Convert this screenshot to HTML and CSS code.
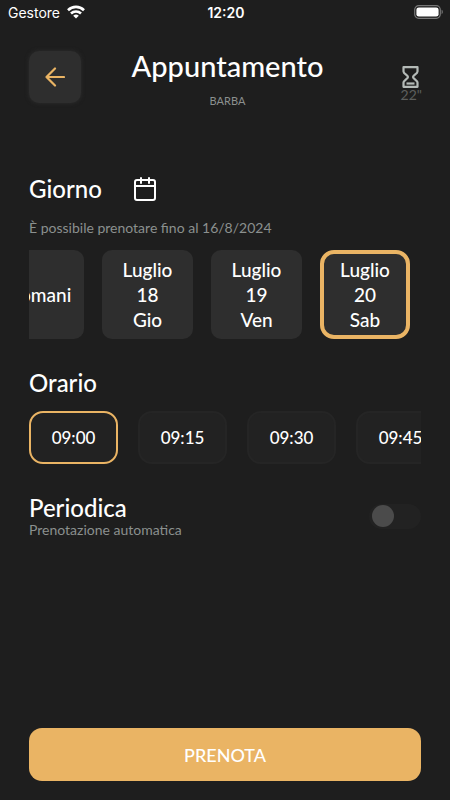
FILE: index.html
```html
<!DOCTYPE html>
<html lang="it">
<head>
<meta charset="utf-8">
<meta name="viewport" content="width=device-width, initial-scale=1">
<title>Appuntamento</title>
<link rel="stylesheet" href="styles.css">
</head>
<body>
<div class="status">
  <div class="status-left">
    <span>Gestore</span>
    <svg width="20" height="14" viewBox="0 0 18 14" fill="none" stroke="#fff" stroke-width="2.6" aria-hidden="true">
      <path d="M1 5.2a11.4 11.4 0 0 1 16 0"/>
      <path d="M4 8.5a7.2 7.2 0 0 1 10 0"/>
      <path d="M9 13.6 6.2 10.8a4 4 0 0 1 5.6 0Z" fill="#fff" stroke="none"/>
    </svg>
  </div>
  <time class="clock">12:20</time>
  <svg class="battery" width="30" height="14" viewBox="0 0 30 14" aria-hidden="true">
    <rect x="0.7" y="0.7" width="25.6" height="12.6" rx="4" fill="none" stroke="#777" stroke-width="1.2"/>
    <rect x="2.4" y="2.4" width="22.2" height="9.2" rx="2.4" fill="#fff"/>
    <path d="M27.6 4.8c1.6.6 1.6 3.8 0 4.4Z" fill="#777"/>
  </svg>
</div>
<header class="header">
  <button class="back" type="button" aria-label="Indietro">
    <svg width="20" height="20" viewBox="0 0 20 20" fill="none" stroke="#eab464" stroke-width="2.2" stroke-linecap="round" stroke-linejoin="round" aria-hidden="true">
      <path d="M19 10H1.500M10 1.500 1.500 10l8.500 8.500"/>
    </svg>
  </button>
  <div class="heading">
    <h1>Appuntamento</h1>
    <p class="service">BARBA</p>
  </div>
  <div class="duration">
    <svg width="18" height="22" viewBox="0 0 18 22" fill="none" stroke="#b4bab7" stroke-width="2.2" stroke-linejoin="round" aria-hidden="true">
      <path d="M1.500 1.200h14v4.200c0 2.300-4.500 4-4.500 5.600s4.500 3.300 4.500 5.600v4.200h-14v-4.200C1.500 14.300 6 12.600 6 11S1.500 7.700 1.500 5.400Z"/>
      <path d="M4.500 17.500h8"/>
    </svg>
    <span>22"</span>
  </div>
</header>
<main class="content">
  <section class="day">
    <div class="title-row">
      <h2>Giorno</h2>
      <button class="calendar" type="button" aria-label="Apri calendario">
        <svg width="22" height="24" viewBox="0 0 22 24" fill="none" stroke="#fff" stroke-width="2" stroke-linecap="round" aria-hidden="true">
          <rect x="1" y="3" width="20" height="20" rx="2"/>
          <path d="M1 9h20M7 1v5M15 1v5"/>
        </svg>
      </button>
    </div>
    <p class="note">È possibile prenotare fino al 16/8/2024</p>
    <div class="days">
      <button class="card" type="button">Domani</button>
      <button class="card" type="button">Luglio<br>18<br>Gio</button>
      <button class="card" type="button">Luglio<br>19<br>Ven</button>
      <button class="card selected" type="button" aria-pressed="true">Luglio<br>20<br>Sab</button>
    </div>
  </section>
  <section class="hours">
    <h2>Orario</h2>
    <div class="times">
      <button class="slot selected" type="button" aria-pressed="true">09:00</button>
      <button class="slot" type="button">09:15</button>
      <button class="slot" type="button">09:30</button>
      <button class="slot" type="button">09:45</button>
    </div>
  </section>
  <section class="periodic">
    <label for="periodic">
      <span class="label-title">Periodica</span>
      <span class="label-note">Prenotazione automatica</span>
    </label>
    <input class="switch" id="periodic" type="checkbox" role="switch">
  </section>
</main>
<footer class="footer">
  <button class="book" type="button">PRENOTA</button>
</footer>
</body>
</html>
```
FILE: styles.css
```css
* {
  box-sizing: border-box;
}

body {
  margin: 0;
  min-height: 100vh;
  display: flex;
  flex-direction: column;
  background: #1e1e1e;
  color: #fff;
  font-family: Lato, "Open Sans", sans-serif;
}

h1, h2, p {
  margin: 0;
  font-weight: 500;
}

button {
  margin: 0;
  padding: 0;
  border: 0;
  background: none;
  color: inherit;
  font: inherit;
  cursor: pointer;
}

svg {
  display: block;
}

.status {
  display: grid;
  grid-template-columns: 1fr auto 1fr;
  align-items: center;
  height: 24px;
  padding: 0 6px 0 8px;
  font-family: Inter, sans-serif;
  font-size: 14px;
}

.status-left {
  display: flex;
  align-items: center;
  gap: 6px;
}

.clock {
  font-weight: 600;
}

.battery {
  justify-self: end;
}

.header {
  display: grid;
  grid-template-columns: 52px 1fr 48px;
  padding: 23px 28px 0 29px;
}

.back {
  display: grid;
  place-items: center;
  width: 52px;
  height: 52px;
  margin-top: 4px;
  border-radius: 10px;
  background: #2e2e2e;
  box-shadow: 0 0 4px #2e2e2e;
}

.heading {
  text-align: center;
}

h1 {
  font-size: 29px;
  line-height: 38px;
}

.service {
  margin-top: 8px;
  color: #8b908e;
  font-size: 11px;
  font-weight: 400;
  line-height: 16px;
}

.duration {
  display: flex;
  flex-direction: column;
  align-items: center;
  justify-self: end;
  padding-top: 19px;
  color: #5c5e5d;
  font-size: 14px;
  line-height: 14px;
}

.content {
  flex: 1;
  padding: 66px 29px 0;
}

.title-row {
  display: flex;
  align-items: center;
  gap: 32px;
}

h2, .label-title {
  font-size: 24px;
  line-height: 28px;
}

.note {
  margin-top: 15px;
  color: #8b908e;
  font-size: 14px;
  font-weight: 400;
  line-height: 20px;
}

.days {
  display: flex;
  justify-content: flex-end;
  gap: 18px;
  margin-top: 12px;
  padding-right: 11px;
  overflow: hidden;
}

.card {
  flex: none;
  width: 91px;
  height: 89px;
  border-radius: 10px;
  background: #2e2e2e;
  font-size: 19px;
  font-weight: 500;
  line-height: 25px;
}

.card.selected {
  width: 90px;
  border: 4px solid #eab464;
  border-radius: 14px;
}

.hours {
  margin-top: 30px;
}

.times {
  display: flex;
  gap: 20px;
  margin-top: 14px;
  overflow: hidden;
}

.slot {
  flex: none;
  width: 89px;
  height: 53px;
  border: 2px solid #252525;
  border-radius: 14px;
  background: #222;
  font-size: 17px;
  font-weight: 500;
}

.slot.selected {
  border-color: #eab464;
}

.periodic {
  display: flex;
  align-items: center;
  justify-content: space-between;
  margin-top: 30px;
}

.periodic label {
  display: flex;
  flex-direction: column;
}

.label-title {
  font-weight: 500;
}

.label-note {
  color: #8b908e;
  font-size: 14px;
  line-height: 16px;
}

.switch {
  appearance: none;
  display: flex;
  align-items: center;
  width: 52px;
  height: 25px;
  margin: 0;
  padding: 0 3px;
  border-radius: 13px;
  background: #222;
}

.switch::before {
  content: "";
  width: 22px;
  height: 22px;
  border-radius: 50%;
  background: #4b4b4b;
}

.switch:checked {
  justify-content: flex-end;
  background: #eab464;
}

.footer {
  padding: 0 29px 19px;
}

.book {
  width: 100%;
  height: 53px;
  border-radius: 13px;
  background: #eab464;
  font-size: 18px;
  font-weight: 500;
}
```
